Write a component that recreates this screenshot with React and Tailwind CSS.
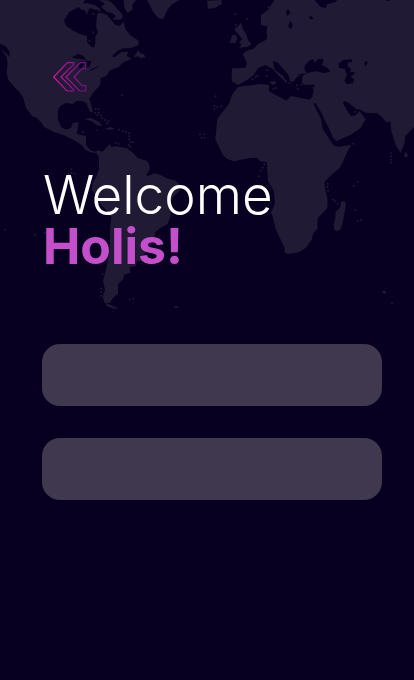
import React from "react";

const islands = [
  [228, 151], [279, 180], [297, 171], [366, 286],
  [287, 327], [296, 328], [286, 338], [296, 338], [303, 346], [292, 346], [306, 354], [315, 360], [325, 363], [321, 370],
  [249, 396], [357, 389], [369, 393], [378, 396], [387, 399], [388, 408], [388, 418], [391, 426], [399, 427], [386, 436], [391, 441], [347, 429], [356, 432],
  [600, 403], [605, 413], [613, 403], [614, 413],
  [647, 289], [643, 317], [643, 326], [652, 321], [664, 319],
  [206, 521], [214, 508], [215, 518], [224, 521], [16, 689], [105, 704], [134, 699],
  [304, 866], [304, 877], [304, 888], [308, 822],
  [706, 43], [708, 75], [741, 57], [708, 84],
  [793, 493], [788, 503], [782, 512], [776, 529],
  [983, 551], [982, 560], [984, 572], [999, 599], [1006, 604], [1013, 611],
  [1073, 546], [1061, 557], [1066, 630], [1073, 663], [1083, 660], [1176, 909],
  [1173, 460], [1173, 469], [1173, 479], [1174, 488], [1060, 431],
];

const seaIslands = [
  [260, 39], [280, 41], [279, 97], [268, 123], [298, 32],
  [757, 238], [767, 230], [773, 228], [800, 210], [800, 228], [818, 252], [820, 267], [828, 264],
  [868, 249], [891, 256], [904, 254], [893, 266], [880, 242], [940, 264], [946, 263],
  [815, 105], [833, 105], [856, 86], [880, 76], [864, 60], [806, 22], [1066, 335],
];

function WorldMap() {
  return (
    <svg
      aria-hidden="true"
      viewBox="0 0 1242 960"
      className="pointer-events-none absolute inset-x-0 top-0 w-full"
    >
      <g fill="#211a35">
        <path d="M0 0H254L248 14L225 27L209 35L192 60L198 77L216 90L237 101L261 108L261 126L271 138L281 143L286 131L286 111L294 96L288 80L291 43L300 38L319 43L334 61L346 75L359 77L371 66L377 88L391 106L416 122L415 136L390 145H371L352 153L336 169L345 171L363 157L385 155L380 167L394 177L370 187L355 202L330 211L319 228L302 235L300 256L281 276L268 296L276 323L278 338L269 334L259 309L248 304L228 303L220 312L197 309L180 319L173 334L174 360L184 382L200 389L213 383L218 370L236 366L233 384L230 402L258 408V434L270 450L286 455L295 450L307 456L323 438L331 433L333 441L350 439L381 445L397 457L413 474L440 482L447 492L450 506L439 525L445 528L462 520L480 524L500 535L527 542L540 556L537 574L520 590L513 602L511 651L502 673L481 684L466 696L462 720L449 740L430 766L438 775L432 782L411 784L407 799L389 802L391 818L373 824L369 838L354 853L354 881L340 893L330 909L314 910L308 890L315 870L309 842L320 800L329 745L330 690L334 650L316 628L300 610L287 586L275 568L278 548L289 531L297 507L297 485L295 467L288 459L272 457L255 449L246 436L217 418L190 405L162 396L131 380L125 368L100 344L84 315L75 298L80 296L100 334L106 353L96 348L77 322L70 294L58 276L42 260L25 239L20 218L23 190L20 170L0 144Z" />
        <path d="M228 12L263 10L284 15L302 26L292 31L269 24L263 37L248 33ZM298 0L323 1L337 9L351 26L366 42L368 54L350 63L338 58L348 49L337 40L321 36L303 20L315 12ZM371 0H408L397 14L398 29L382 38L373 22Z" />
        <path d="M441 0H538L514 14L500 34L490 57L474 54L458 34L449 14Z" />
        <path d="M401 173L409 160L414 151L421 160L432 163L436 172L424 174L413 169ZM253 357L273 354L296 365L308 378L291 376L276 364ZM315 386L332 381L345 387L330 390ZM287 389L295 390L289 394ZM324 438L329 434L328 448L323 447ZM320 910L333 916L354 925L342 926L319 918ZM338 934L342 936L338 937ZM386 897L392 895L390 904ZM397 894L404 893L399 902ZM522 918L534 919L533 925L524 923Z" />
        <path d="M621 2L664 0L666 12L644 24L624 26ZM704 91L723 68L729 88L738 101L744 121L754 132L742 141L717 143L725 132L716 128L727 118L717 105ZM690 129L696 106L708 104L712 117L706 129Z" />
        <path d="M823 0H1242V382L1215 409L1214 429L1202 459L1187 435L1174 393L1171 363L1160 368L1146 352L1132 340L1097 338L1081 329L1067 326L1051 313L1037 304L1028 307L1042 333L1053 349L1068 346L1078 333L1097 357L1081 385L1056 402L1009 424L997 410L991 393L980 371L960 331L946 309L940 311L963 356L968 386L1001 437L1017 440L1054 434L1043 454L1031 480L1019 504L990 529L973 547L976 570L983 600L982 624L954 653L952 662L953 685L939 702L935 719L916 745L896 757L863 762L853 756L854 744L845 725L827 687L819 653L813 638L825 608L821 573L804 542L801 496L801 487L780 484L771 473L748 474L702 484L683 478L670 467L656 439L646 418L652 356L688 310L695 286L713 261L776 252L807 255L807 274L859 302L873 288L929 299L937 290L944 254H914L906 250L907 226L893 229L881 243L859 248L841 232L815 204L795 195L775 203L762 224L741 240L714 255L695 244L696 205L737 203L741 188L728 163L740 152L761 146L775 131L801 118L802 93L812 93L820 104L836 103L852 87L855 71L860 57L854 36L864 20L877 8L892 13L884 27L871 40L876 59L910 57L920 62L900 68L877 72L872 88L876 104L849 107L830 114L812 112L799 101L802 78L783 76L783 45L804 30Z" />
        <path d="M1024 603L1036 605L1037 618L1029 664L1023 686L1013 694L1003 690L1001 671L1006 656L1007 635L1020 623ZM1213 463L1218 455L1224 466L1219 473L1213 469ZM1146 876L1153 871L1159 878L1152 882Z" />
        <path d="M878 69L888 77L892 87L884 91L875 81ZM809 246L825 243L829 250L816 253ZM867 234L879 251L874 254L862 239Z" />
      </g>
      <g fill="#080020">
        <path d="M0 131L17 139L28 154L29 172L17 158L0 146ZM215 173L235 161L251 169L258 179L238 177ZM238 184L250 182L255 190L242 208L237 201ZM254 181L275 184L268 201L258 203ZM264 217L276 206L300 196L292 202Z" />
        <path d="M818 183L832 187L850 207L864 223L870 239L858 241L849 228L824 209ZM892 224L920 219L913 208L915 196L930 180L941 178L943 188L956 177L969 176L970 187L964 195L982 203L991 214L974 220L947 214L921 219L906 228ZM1016 190L1030 180L1055 178L1057 185L1043 188L1043 199L1053 207L1051 217L1064 216L1062 223L1052 229L1062 238L1059 250L1040 253L1033 242L1041 225L1034 207L1017 203ZM1093 190L1098 183L1103 185L1100 195L1095 197Z" />
        <path d="M944 0H1012L1005 7L981 13L978 24L962 21ZM1156 0H1170L1165 4ZM926 54L932 47L940 55L936 59ZM858 240L866 239L882 252L865 251ZM871 62L879 76L873 87L864 79ZM858 34L865 27L871 38L862 49Z" />
        <path d="M341 62L350 57L356 67L347 71ZM239 36L252 28L258 40L248 45Z" />
      </g>
      <g fill="#211a35">
        {[...islands, ...seaIslands].map(([x, y]) => (
          <circle key={`${x}-${y}`} cx={x} cy={y} r="3" />
        ))}
      </g>
    </svg>
  );
}

function BackIcon() {
  return (
    <svg aria-hidden="true" viewBox="0 0 102 90" className="h-[30px] w-[34px]">
      <defs>
        <linearGradient id="back-stroke" gradientUnits="userSpaceOnUse" x1="0" y1="45" x2="100" y2="45">
          <stop offset="0" stopColor="#d3169f" />
          <stop offset="1" stopColor="#6d1085" />
        </linearGradient>
      </defs>
      <g fill="none" stroke="url(#back-stroke)" strokeWidth="3.5">
        <path d="M2 45L43 2H62V7L24 45L62 83V87H42Z" />
        <path d="M39 45L82 2H98V20H87L63 45L87 71H98V87H80Z" />
      </g>
    </svg>
  );
}

export default function App() {
  return (
    <main className="relative min-h-screen bg-[#080020] pt-[62px] pr-8 pb-10 pl-[42px] font-['Inter',sans-serif]">
      <WorldMap />
      <div className="relative">
        <button type="button" aria-label="Back" className="ml-[11px] block">
          <BackIcon />
        </button>
        <h1 className="mt-[78px] pl-px leading-[51px] text-white">
          <span className="block text-[53px] font-light">Welcome</span>
          <strong className="block text-[50px] font-bold text-[#c44fca]">Holis!</strong>
        </h1>
        <form className="mt-[72px] flex flex-col gap-8">
          <input
            type="text"
            aria-label="Username"
            className="h-[62px] w-full rounded-[18px] bg-[#3f384f] px-5 text-lg text-white outline-none"
          />
          <input
            type="password"
            aria-label="Password"
            className="h-[62px] w-full rounded-[18px] bg-[#3f384f] px-5 text-lg text-white outline-none"
          />
        </form>
      </div>
    </main>
  );
}
